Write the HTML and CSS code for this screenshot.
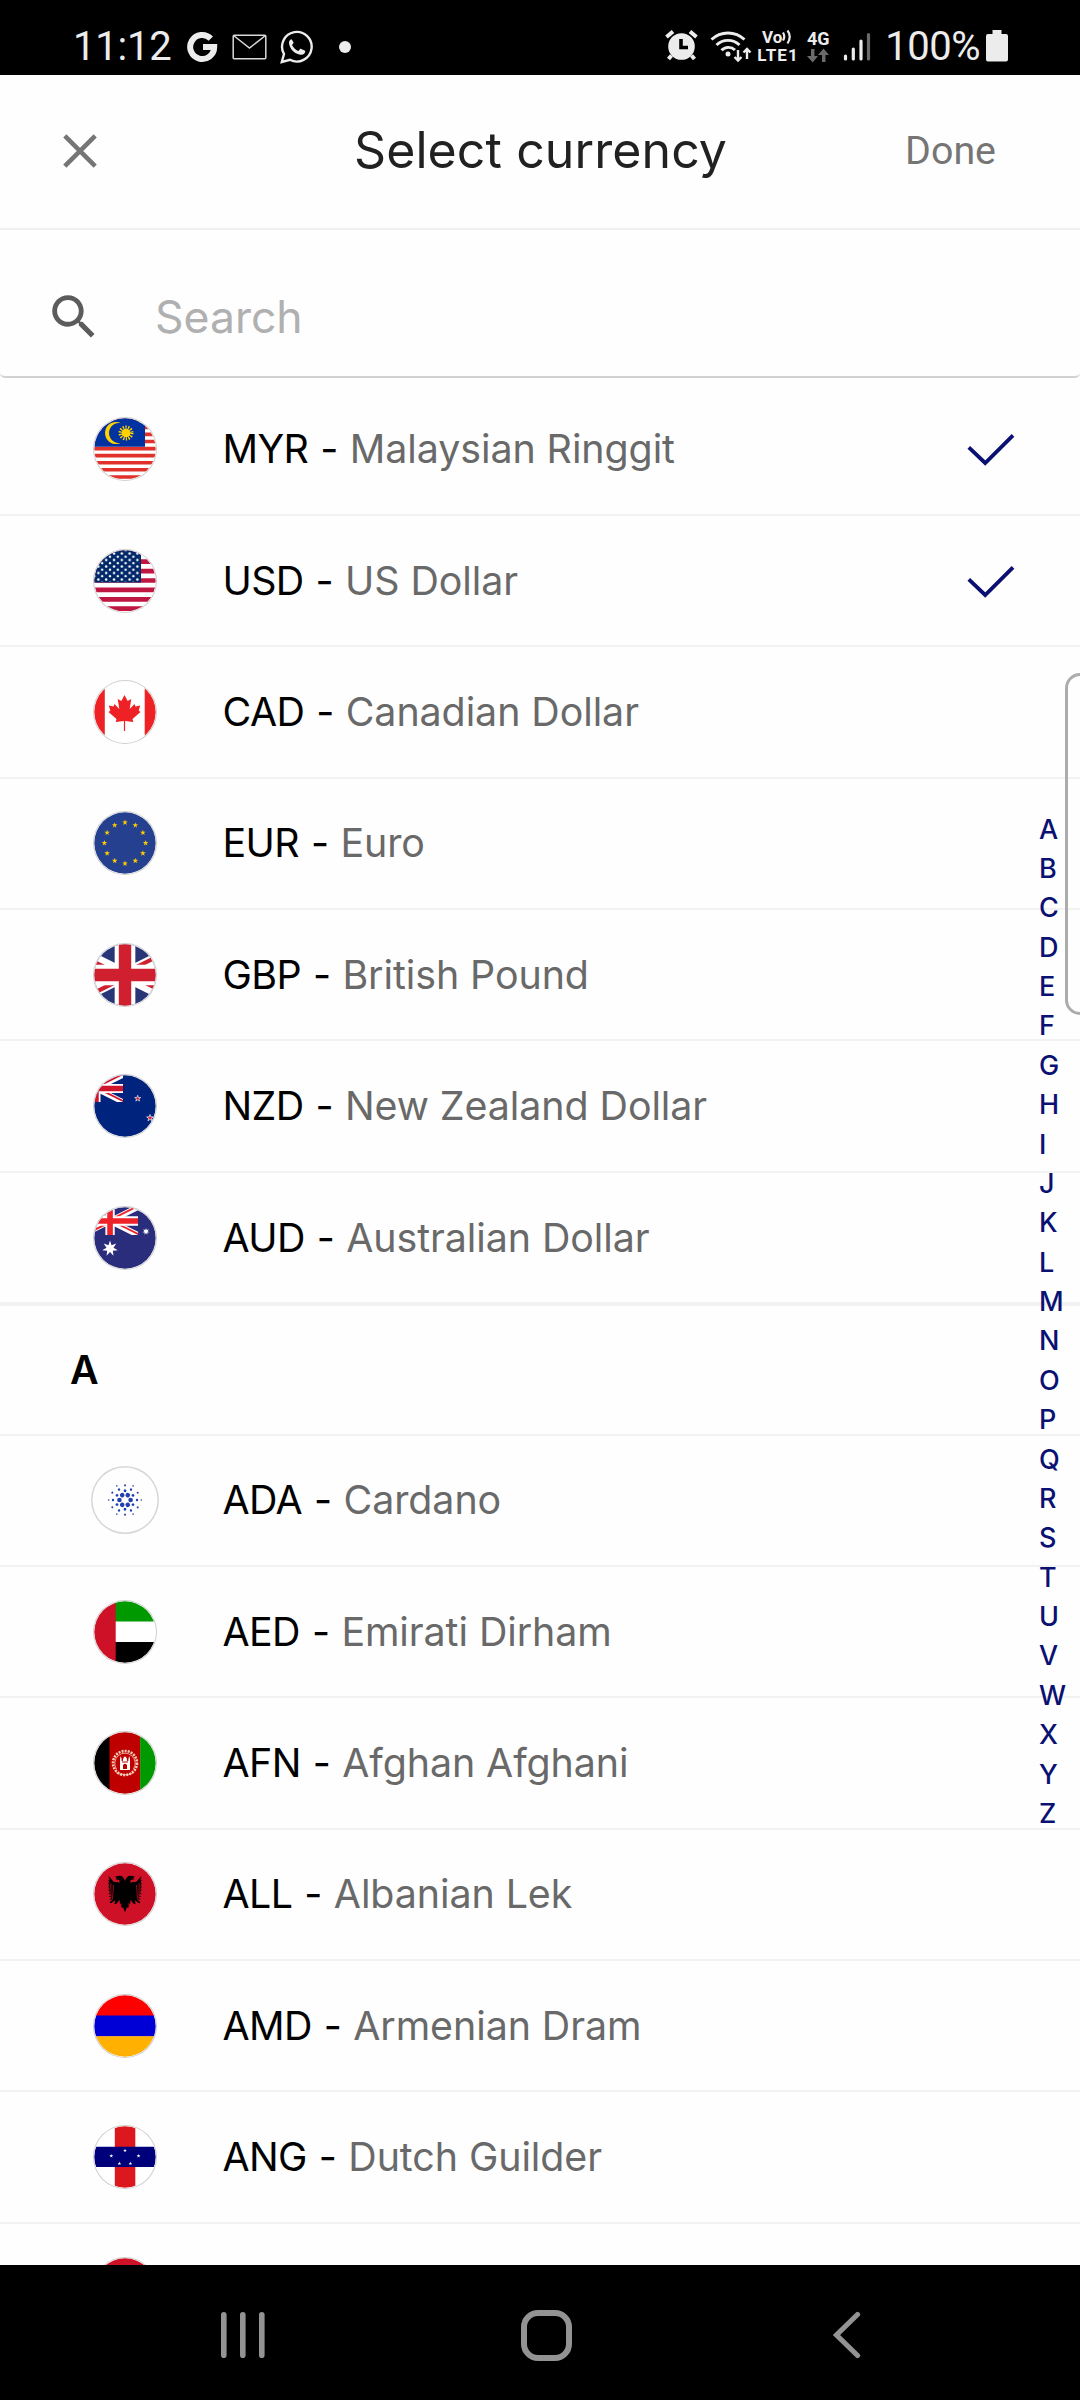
FILE: index.html
```html
<!DOCTYPE html>
<html lang="en">
<head>
<meta charset="utf-8">
<title>Select currency</title>
<link rel="stylesheet" href="styles.css">
</head>
<body>
<svg class="defs" width="0" height="0" aria-hidden="true">
  <defs>
    <clipPath id="round"><circle cx="31" cy="31" r="30.7"/></clipPath>
    <clipPath id="jack-box"><path d="M0 0h60v30H0z"/></clipPath>
    <clipPath id="jack-half"><path d="M30 15h30v15zv15H0zH0V0zV0h30z"/></clipPath>
    <pattern id="us-stars" width="7.8" height="6.5" patternUnits="userSpaceOnUse" x="0.4" y="0.2">
      <circle cx="4" cy="3.3" r="1.25" fill="#fff"/>
      <circle cx="0" cy="0" r="1.25" fill="#fff"/><circle cx="7.8" cy="0" r="1.25" fill="#fff"/>
      <circle cx="0" cy="6.5" r="1.25" fill="#fff"/><circle cx="7.8" cy="6.5" r="1.25" fill="#fff"/>
    </pattern>
    <path id="star" d="M0-1 .225-.309H.951L.363.118.588.809 0 .382-.588.809-.363.118-.951-.309H-.225z"/>
    <path id="star7" d="M0-1 .195-.405.782-.623.439-.1.975.223.352.281.434.901 0 .45-.434.901-.352.281-.975.223-.439-.1-.782-.623-.195-.405z"/>
    <g id="jack" clip-path="url(#jack-box)">
      <path d="M0 0l60 30M60 0L0 30" stroke="#fff" stroke-width="6"/>
      <path d="M0 0l60 30M60 0L0 30" clip-path="url(#jack-half)" stroke="currentColor" stroke-width="4"/>
      <path d="M30 0v30M0 15h60" stroke="#fff" stroke-width="10"/>
      <path d="M30 0v30M0 15h60" stroke="currentColor" stroke-width="6"/>
    </g>
    <g id="ada6">
      <circle cx="5.6" cy="0" r="2.3"/><circle cx="8" cy="-4.6" r="1.4"/><circle cx="12" cy="0" r="1.2"/>
      <circle cx="12.7" cy="-7.3" r="1"/><circle cx="16.3" cy="0" r=".8"/>
    </g>
    <path id="tick" d="M1.800 15.400 18.200 31 46 3.300" fill="none" stroke="#0a1172" stroke-width="3.800"/>
  </defs>
</svg>

<div class="phone">
  <header class="status">
    <div class="status-left">
      <span class="clock">11:12</span>
      <svg class="ic-g" width="31" height="32" viewBox="0 0 31 32" fill="none" stroke="#ececec" stroke-width="6"><path d="M23.800 7.600A12 12 0 1 0 27.200 16H16" /></svg>
      <svg class="ic-mail" width="35" height="26" viewBox="0 0 35 26" fill="none" stroke="#d8d8d8" stroke-width="1.500"><rect x="1.200" y="1.200" width="32.600" height="23.600" rx="1"/><path d="M1.500 1.500 17.500 14 33.500 1.500"/></svg>
      <svg class="ic-wa" width="34" height="34" viewBox="0 0 34 34"><path d="M1.800 32 4 24A14.800 14.800 0 1 1 10 29.800z" fill="none" stroke="#ececec" stroke-width="2.400"/><path d="M11.500 9.200c-1.700.3-2.800 2.200-2.500 4.300.9 5.800 5.800 10.500 11.600 11.300 2.400.3 4.200-.9 4.600-2.700.1-.8 0-1.200-.6-1.500l-3.400-1.700c-.6-.2-.9-.2-1.300.3l-1.500 1.800c-3-1.200-5.200-3.400-6.400-6l1.200-1.600c.4-.5.4-.9.2-1.400z" fill="#ececec"/></svg>
      <span class="dot"></span>
    </div>
    <div class="status-right">
      <svg class="ic-alarm" width="33" height="31" viewBox="0 0 33 31"><circle cx="16.500" cy="16.500" r="13.300" fill="#ececec"/><path d="M8 1.500 1.500 7M25 1.500 31.500 7M6.500 25.500 3.500 29M26.500 25.500l3 3.500" stroke="#ececec" stroke-width="4"/><path d="M16 9v8.500h7" fill="none" stroke="#000" stroke-width="3.600"/></svg>
      <svg class="ic-wifi" width="42" height="34" viewBox="0 0 42 34" fill="none" stroke="#ececec" stroke-width="2.900"><path d="M1.500 9.500a24 24 0 0 1 33 0M6.500 15a16.500 16.500 0 0 1 23 0M11.500 20.300a9.500 9.500 0 0 1 13.500-.3"/><circle cx="18" cy="24" r="2.500" fill="#ececec" stroke="none"/><path d="M28 20v10M24.500 27l3.500 3.500 3.500-3.500M37 29V19M33.500 22.500 37 19l3.500 3.500" stroke-width="2.400"/></svg>
      <div class="volte"><span class="vo">Vo<svg width="10" height="16" viewBox="0 0 10 16" fill="none" stroke="#ececec" stroke-width="2.200"><path d="M1 3.500q2.500 4 0 8M5.500 1.500q4.500 6 0 13"/></svg></span><span class="lte">LTE1</span></div>
      <div class="net"><span>4G</span><svg width="24" height="15" viewBox="0 0 24 15" fill="#6a6a6a"><path d="M5 1h3.500v7H12l-5.300 6.500L1 8h4zM16 14V7h-4l5.500-6.500L23 7h-3.500v7z"/></svg></div>
      <svg class="ic-signal" width="28" height="30" viewBox="0 0 28 30" stroke-width="3.200" stroke-linecap="round" stroke="#ececec"><path d="M2.500 24v3M10.300 17v10M18 9v18"/><path d="M25.500 2.500v24.500" stroke="#6a6a6a"/></svg>
      <span class="pct">100%</span>
      <svg class="ic-batt" width="22" height="32" viewBox="0 0 22 32" fill="#ececec"><path d="M6.500 0h9v4H20q2 0 2 2v23.500q0 2-2 2H2q-2 0-2-2V6q0-2 2-2h4.500z"/></svg>
    </div>
  </header>

  <div class="titlebar">
    <svg class="close" width="34" height="34" viewBox="0 0 34 34"><path d="M1.800 1.800l30.400 30.400M32.200 1.800L1.800 32.200" stroke="#757575" stroke-width="4.500"/></svg>
    <h1>Select currency</h1>
    <button class="done">Done</button>
  </div>

  <div class="search">
    <svg width="58" height="58" viewBox="0 0 24 24" fill="#5c5c5c"><path d="M15.500 14h-.79l-.28-.27C15.410 12.590 16 11.110 16 9.500 16 5.910 13.090 3 9.500 3S3 5.910 3 9.500 5.910 16 9.500 16c1.610 0 3.090-.59 4.230-1.570l.27.28v.79l5 4.990L20.490 19l-4.990-5zm-6 0C7.010 14 5 11.990 5 9.500S7.010 5 9.500 5 14 7.010 14 9.500 11.990 14 9.500 14z"/></svg>
    <span>Search</span>
  </div>

  <main class="list">
    <div class="row"><div class="flag"><svg viewBox="0 0 62 62"><g clip-path="url(#round)"><path fill="#fff" d="M0 0h62v62H0z"/><path d="M0 2.300h62M0 9.400h62M0 16.400h62M0 23.500h62M0 30.600h62M0 37.600h62M0 44.700h62M0 51.700h62M0 59h62" stroke="#e0312b" stroke-width="3.600"/><path fill="#0032a0" d="M0 0h51v28.700H0z"/><path d="M27 5.200A11 11 0 1 0 27 24.800 10 10 0 1 1 27 5.200z" fill="#ffd100"/><circle cx="32" cy="15" r="4.300" fill="#ffd100"/><circle cx="32" cy="15" r="5.500" fill="none" stroke="#ffd100" stroke-width="4" stroke-dasharray="1.200 1.268"/></g></svg></div><p><b>MYR - </b>Malaysian Ringgit</p><svg class="check" width="48" height="34" viewBox="0 0 48 34"><use href="#tick"/></svg></div>
    <div class="row"><div class="flag"><svg viewBox="0 0 62 62"><g clip-path="url(#round)"><path fill="#fff" d="M0 0h62v62H0z"/><path d="M0 2.300h62M0 11.700h62M0 21.100h62M0 30.500h62M0 39.900h62M0 49.300h62M0 58.700h62" stroke="#bf1742" stroke-width="4.700"/><path fill="#002868" d="M0 0h47v32.500H0z"/><path fill="url(#us-stars)" d="M0 0h46v32H0z"/></g></svg></div><p><b>USD - </b>US Dollar</p><svg class="check" width="48" height="34" viewBox="0 0 48 34"><use href="#tick"/></svg></div>
    <div class="row"><div class="flag"><svg viewBox="0 0 62 62"><g clip-path="url(#round)"><path fill="#fff" d="M0 0h62v62H0z"/><path fill="#ee2224" d="M0 0h10.800v62H0zM50.700 0H62v62H50.700zM30.500 14l3.200 6 3.600-2-1.600 10 4.800-5 1 2.500 4.700-.9-1.500 5 1.800 1.500-8 6.900.8 3.100-8.200-1V50h-1.200v-9.900l-8.200 1 .8-3.100-8-6.900 1.800-1.500-1.500-5 4.700.9 1-2.500 4.800 5-1.600-10 3.600 2z"/></g></svg></div><p><b>CAD - </b>Canadian Dollar</p></div>
    <div class="row"><div class="flag"><svg viewBox="0 0 62 62"><g clip-path="url(#round)"><path fill="#24408e" d="M0 0h62v62H0z"/><g fill="#fc0"><use href="#star" transform="translate(31 10.500) scale(3)"/><use href="#star" transform="translate(41.300 13.200) scale(3)"/><use href="#star" transform="translate(48.900 20.700) scale(3)"/><use href="#star" transform="translate(51.600 31) scale(3)"/><use href="#star" transform="translate(48.900 41.300) scale(3)"/><use href="#star" transform="translate(41.300 48.800) scale(3)"/><use href="#star" transform="translate(31 51.500) scale(3)"/><use href="#star" transform="translate(20.700 48.800) scale(3)"/><use href="#star" transform="translate(13.100 41.300) scale(3)"/><use href="#star" transform="translate(10.400 31) scale(3)"/><use href="#star" transform="translate(13.100 20.700) scale(3)"/><use href="#star" transform="translate(20.700 13.200) scale(3)"/></g></g></svg></div><p><b>EUR - </b>Euro</p></div>
    <div class="row"><div class="flag"><svg viewBox="0 0 62 62"><g clip-path="url(#round)"><path fill="#283678" d="M0 0h62v62H0z"/><use href="#jack" color="#d0202f" transform="translate(-31 0) scale(2.067)"/></g></svg></div><p><b>GBP - </b>British Pound</p></div>
    <div class="row"><div class="flag"><svg viewBox="0 0 62 62"><g clip-path="url(#round)"><path fill="#00247d" d="M0 0h62v62H0z"/><use href="#jack" color="#d0142c" transform="translate(-25 0) scale(.9)"/><g fill="#d0142c" stroke="#fff" stroke-width=".2"><use href="#star" transform="translate(43.700 23.500) scale(3.200)"/><use href="#star" transform="translate(56 43) scale(3.500)"/></g></g></svg></div><p><b>NZD - </b>New Zealand Dollar</p></div>
    <div class="row"><div class="flag"><svg viewBox="0 0 62 62"><g clip-path="url(#round)"><path fill="#2a2c7c" d="M0 0h62v62H0z"/><use href="#jack" color="#ee2229" transform="translate(-12 0) scale(.935)"/><g fill="#fff"><use href="#star7" transform="translate(16 41.500) scale(8)"/><use href="#star7" transform="translate(52 24.500) scale(3.600)"/></g></g></svg></div><p><b>AUD - </b>Australian Dollar</p></div>

    <h2 class="section">A</h2>

    <div class="row"><div class="flag coin"><svg viewBox="-34 -34 68 68"><g fill="#2340ae"><use href="#ada6"/><use href="#ada6" transform="rotate(60)"/><use href="#ada6" transform="rotate(120)"/><use href="#ada6" transform="rotate(180)"/><use href="#ada6" transform="rotate(240)"/><use href="#ada6" transform="rotate(300)"/></g></svg></div><p><b>ADA - </b>Cardano</p></div>
    <div class="row"><div class="flag"><svg viewBox="0 0 62 62"><g clip-path="url(#round)"><path fill="#fff" d="M0 0h62v62H0z"/><path fill="#090" d="M21 0h41v20.500H21z"/><path d="M21 41h41v21H21z"/><path fill="#ce1126" d="M0 0h21.700v62H0z"/></g></svg></div><p><b>AED - </b>Emirati Dirham</p></div>
    <div class="row"><div class="flag"><svg viewBox="0 0 62 62"><g clip-path="url(#round)"><path d="M0 0h16v62H0z"/><path fill="#bf0000" d="M15.500 0h31v62h-31z"/><path fill="#090" d="M46.200 0H62v62H46.200z"/><g fill="none" stroke="#f3cdb8"><circle cx="31" cy="31" r="12" stroke-width="2.600" stroke-dasharray="2 1.100"/><path d="M22.500 37a10.200 10.200 0 1 1 17 0M22 40.500q9 4.500 18 0" stroke-width=".8"/></g><path fill="#fff" d="M26 38V27l.8-3 .8 3v2h1.200q0-3.500 2.200-4.800 2.200 1.300 2.200 4.800h1.200v-2l.8-3 .8 3v11z"/><path fill="#bf0000" d="M29 37v-4q2-2.500 4 0v4zM28 29.500h6v1h-6z"/></g></svg></div><p><b>AFN - </b>Afghan Afghani</p></div>
    <div class="row"><div class="flag"><svg viewBox="0 0 62 62"><g clip-path="url(#round)"><path fill="#ce1126" d="M0 0h62v62H0z"/><path d="M31 18c-1-3.500-3-5.500-5.500-5.300-1.800 0-3 1-4.500 1l2 1.600-1.500 1.200 3.500.3 1 2.700-6.500-.7-5-6 1.200 5-1.700-1.300 1.700 4-1.700-.8 1.700 4-1.700-.5 2 3.600-2-.2 2.300 3.200-2.100.2 3 2.400-2.600 1 3.400 1-3 2 4-.2-3.500 3 1.500 1 4-3-.5 4 2-.5 3-4 .5 5 1.500-2-.2 4.500 2 .5 1.700 4.500 1.700-4.500 2-.5-.2-4.500 1.500 2 .5-5 3 4 2 .5-.5-4 4 3 1.500-1-3.500-3 4 .2-3-2 3.400-1-2.600-1 3-2.400-2.100-.2 2.300-3.200-2 .2 2-3.600-1.700.5 1.700-4-1.700.8 1.700-4-1.700 1.300 1.200-5-5 6-6.500.7 1-2.700 3.500-.3-1.500-1.200 2-1.600c-1.500 0-2.700-1-4.500-1-2.500-.2-4.500 1.800-5.500 5.300z"/><path d="M19.500 22l-1 14M16.800 20l.2 14M42.500 22l1 14M45.200 20l-.2 14" stroke="#ce1126" stroke-width=".7"/></g></svg></div><p><b>ALL - </b>Albanian Lek</p></div>
    <div class="row"><div class="flag"><svg viewBox="0 0 62 62"><g clip-path="url(#round)"><path fill="red" d="M0 0h62v21H0z"/><path fill="#0000d6" d="M0 20.500h62v21H0z"/><path fill="#ffb000" d="M0 41.300h62V62H0z"/></g></svg></div><p><b>AMD - </b>Armenian Dram</p></div>
    <div class="row"><div class="flag"><svg viewBox="0 0 62 62"><g clip-path="url(#round)"><path fill="#fff" d="M0 0h62v62H0z"/><path fill="#dc171d" d="M20.800 0h20.500v62H20.800z"/><path fill="#00007b" d="M0 20.700h62V41H0z"/><g fill="#fff"><use href="#star" transform="translate(31 24.500) scale(2)"/><use href="#star" transform="translate(17.300 29.900) scale(2)"/><use href="#star" transform="translate(44.500 29.900) scale(2)"/><use href="#star" transform="translate(25.400 37.600) scale(2)"/><use href="#star" transform="translate(36.400 37.600) scale(2)"/></g></g></svg></div><p><b>ANG - </b>Dutch Guilder</p></div>
    <div class="row"><div class="flag"><svg viewBox="0 0 62 62"><g clip-path="url(#round)"><path fill="#ce1126" d="M0 0h62v31H0z"/><path d="M0 31h62v31H0z"/></g></svg></div></div>
  </main>

  <nav class="navbar">
    <svg width="46" height="48" viewBox="0 0 46 48" stroke="#939393" stroke-width="5.600" stroke-linecap="round"><path d="M3.800 3.800v40.400M22.800 3.800v40.400M41.800 3.800v40.400"/></svg>
    <svg class="home" width="51" height="51" viewBox="0 0 51 51"><rect x="3" y="3" width="45" height="45" rx="14" fill="none" stroke="#939393" stroke-width="6"/></svg>
    <svg width="30" height="48" viewBox="0 0 30 48"><path d="M25.500 3.500 4.500 24l21 20.500" fill="none" stroke="#939393" stroke-width="5.200" stroke-linecap="round"/></svg>
  </nav>

  <aside class="index"><span>A</span><span>B</span><span>C</span><span>D</span><span>E</span><span>F</span><span>G</span><span>H</span><span>I</span><span>J</span><span>K</span><span>L</span><span>M</span><span>N</span><span>O</span><span>P</span><span>Q</span><span>R</span><span>S</span><span>T</span><span>U</span><span>V</span><span>W</span><span>X</span><span>Y</span><span>Z</span></aside>
  <div class="edge-handle"></div>
</div>
</body>
</html>
```
FILE: styles.css
```css
* { box-sizing: border-box; margin: 0; padding: 0; }
body { background: #fff; font-family: Inter, "Liberation Sans", sans-serif; }
svg { display: block; flex: none; }
.defs { position: absolute; }

.phone {
  position: relative;
  width: 1080px;
  height: 2400px;
  display: flex;
  flex-direction: column;
  overflow: hidden;
  background: #fefefe;
}

/* status bar */
.status {
  flex: none;
  height: 75px;
  padding: 18px 72px 0 73px;
  display: flex;
  justify-content: space-between;
  background: #000;
  color: #ececec;
  font-family: Roboto, sans-serif;
}
.status-left, .status-right { display: flex; align-items: center; height: 57px; }
.clock { font-size: 40px; line-height: 57px; letter-spacing: -0.2px; }
.ic-g { margin-left: 15px; }
.ic-mail { margin-left: 14px; }
.ic-wa { margin-left: 13px; }
.dot { width: 12px; height: 12px; margin-left: 25px; border-radius: 50%; background: #ececec; }
.ic-alarm { margin-right: 12px; margin-bottom: 2px; }
.volte { width: 42px; margin-left: 4px; display: flex; flex-direction: column; gap: 1px; font-weight: 700; font-size: 17px; }
.vo { display: flex; align-items: center; justify-content: center; height: 16px; line-height: 16px; }
.lte { height: 18px; line-height: 18px; letter-spacing: 1.100px; padding-left: 1px; }
.net { width: 26px; margin-left: 7px; display: flex; flex-direction: column; align-items: center; font-weight: 700; font-size: 18px; line-height: 17px; gap: 1px; }
.ic-signal { margin-left: 12px; }
.pct { margin-left: 14px; font-size: 40px; line-height: 57px; letter-spacing: -0.5px; }
.ic-batt { margin-left: 6px; margin-bottom: 2px; }

/* title bar */
.titlebar {
  flex: none;
  height: 155px;
  padding: 0 84px 2px 63px;
  display: grid;
  grid-template-columns: 1fr auto 1fr;
  align-items: center;
  border-bottom: 2px solid #efefef;
}
h1 { font-size: 50px; font-weight: 400; line-height: 60px; color: #212121; letter-spacing: 0.1px; margin: 0 0 2px 22px; }
.done { justify-self: end; border: 0; background: none; font: 400 39.375px/46px Roboto, sans-serif; color: #757575; }

/* search */
.search {
  flex: none;
  height: 148px;
  padding: 28px 0 0 45px;
  display: flex;
  align-items: center;
  border-bottom: 2px solid #d2d2d2;
  border-radius: 0 0 5px 5px;
}
.search span { margin-left: 52px; font-size: 44.500px; color: #b0b0b0; }

/* currency list */
.list { flex: 1; min-height: 0; padding-top: 6.600px; overflow: hidden; }
.row {
  height: 131.380px;
  padding: 0 65px 0 91px;
  display: flex;
  align-items: center;
  border-bottom: 2px solid #f2f2f2;
}
.flag { flex: none; width: 68px; display: flex; justify-content: center; }
.flag svg { width: 62px; height: 62px; border-radius: 50%; box-shadow: 0 0 0 1px #cfcfcf; }
.coin svg { width: 68px; height: 68px; box-shadow: inset 0 0 0 1.500px #d6d6d6; }
.row p { flex: 1; margin-left: 63.500px; font-size: 39.375px; line-height: 48px; letter-spacing: -0.070px; color: #696969; white-space: pre; }
.row b { font-weight: 400; letter-spacing: -0.600px; word-spacing: 1.500px; color: #000; }
.section {
  height: 131.380px;
  padding: 0 70px;
  border-top: 2px solid #f2f2f2;
  border-bottom: 2px solid #f2f2f2;
  font-size: 39.375px;
  font-weight: 600;
  line-height: 128px;
  color: #000;
}

/* system navigation */
.navbar {
  flex: none;
  height: 135px;
  padding: 5px 218px 0 220px;
  display: flex;
  align-items: center;
  justify-content: space-between;
  background: #000;
}
.home { margin-right: 6px; }

/* overlays */
.index {
  position: absolute;
  left: 1039px;
  top: 809.500px;
  display: flex;
  flex-direction: column;
  font-size: 27px;
  font-weight: 500;
  line-height: 39.375px;
  color: #0a1172;
}
.edge-handle {
  position: absolute;
  left: 1065px;
  top: 673px;
  width: 30px;
  height: 342px;
  border: 3px solid #acacac;
  border-radius: 15px;
}
```
